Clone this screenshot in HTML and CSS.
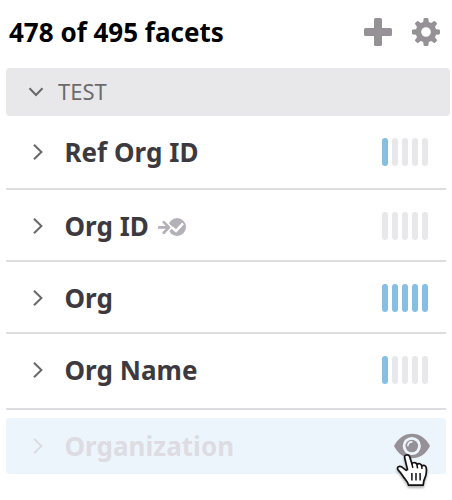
FILE: index.html
```html
<!DOCTYPE html>
<html lang="en">
<head>
<meta charset="utf-8">
<title>Facets</title>
<link rel="stylesheet" href="styles.css">
</head>
<body>
<main class="panel">
  <header class="header">
    <h1 class="title">478 of 495 facets</h1>
    <div class="actions">
      <svg class="icon" width="28" height="28" viewBox="0 0 28 28" aria-label="Add"><rect x="10" y="0" width="8" height="28" rx="1.6"/><rect x="0" y="10" width="28" height="8" rx="1.6"/></svg>
      <svg class="icon" width="28" height="28" viewBox="0 0 28 28" aria-label="Settings"><path fill-rule="evenodd" d="M11.6 1 Q11.7 0 12.7 0 H15.3 Q16.3 0 16.4 1 L16.8 4 L19.3 5 L21.7 3.2 Q22.4 2.7 23 3.3 L24.7 5 Q25.3 5.6 24.8 6.3 L23 8.7 L24 11.2 L27 11.6 Q28 11.7 28 12.7 V15.3 Q28 16.3 27 16.4 L24 16.8 L23 19.3 L24.8 21.7 Q25.3 22.4 24.7 23 L23 24.7 Q22.4 25.3 21.7 24.8 L19.3 23 L16.8 24 L16.4 27 Q16.3 28 15.3 28 H12.7 Q11.7 28 11.6 27 L11.2 24 L8.7 23 L6.3 24.8 Q5.6 25.3 5 24.7 L3.3 23 Q2.7 22.4 3.2 21.7 L5 19.3 L4 16.8 L1 16.4 Q0 16.3 0 15.3 V12.7 Q0 11.7 1 11.6 L4 11.2 L5 8.7 L3.2 6.3 Q2.7 5.6 3.3 5 L5 3.3 Q5.6 2.7 6.3 3.2 L8.7 5 L11.2 4 Z M14 9.2 A4.8 4.8 0 1 0 14 18.8 A4.8 4.8 0 1 0 14 9.2 Z"/></svg>
    </div>
  </header>
  <section>
    <h2 class="group">
      <svg class="group-chevron" width="16" height="10" viewBox="0 0 16 10"><path d="M1.5 1.3 L8 8 L14.5 1.3"/></svg>
      <span class="group-name">TEST</span>
    </h2>
    <ul class="facets">
      <li class="facet facet-first">
        <svg class="chevron" width="10" height="16" viewBox="0 0 10 16"><path d="M1 .8 L8.4 8 L1 15.2"/></svg>
        <span class="name">Ref Org ID</span>
        <span class="meter"><i class="bar on"></i><i class="bar"></i><i class="bar"></i><i class="bar"></i><i class="bar"></i></span>
      </li>
      <li class="facet">
        <svg class="chevron" width="10" height="16" viewBox="0 0 10 16"><path d="M1 .8 L8.4 8 L1 15.2"/></svg>
        <span class="name">Org ID</span>
        <svg class="mapped" width="28" height="18" viewBox="0 0 28 18"><circle cx="19.1" cy="9" r="8.9"/><path class="gap" d="M0 9.4 H11 M6.2 4 L11.5 9.4 L6.2 14.8"/><path class="arrow" d="M1 9.4 H10 M5.8 4.1 L11 9.4 L5.8 14.7"/><path class="check" d="M13.8 9.2 L18 13 L25 5.3"/></svg>
        <span class="meter"><i class="bar"></i><i class="bar"></i><i class="bar"></i><i class="bar"></i><i class="bar"></i></span>
      </li>
      <li class="facet">
        <svg class="chevron" width="10" height="16" viewBox="0 0 10 16"><path d="M1 .8 L8.4 8 L1 15.2"/></svg>
        <span class="name">Org</span>
        <span class="meter"><i class="bar on"></i><i class="bar on"></i><i class="bar on"></i><i class="bar on"></i><i class="bar on"></i></span>
      </li>
      <li class="facet facet-last">
        <svg class="chevron" width="10" height="16" viewBox="0 0 10 16"><path d="M1 .8 L8.4 8 L1 15.2"/></svg>
        <span class="name">Org Name</span>
        <span class="meter"><i class="bar on"></i><i class="bar"></i><i class="bar"></i><i class="bar"></i><i class="bar"></i></span>
      </li>
      <li class="facet facet-hidden">
        <svg class="chevron" width="10" height="16" viewBox="0 0 10 16"><path d="M1 .8 L8.4 8 L1 15.2"/></svg>
        <span class="name">Organization</span>
        <span class="toggle">
          <svg class="eye" width="36" height="26" viewBox="0 0 36 26"><path class="lid" d="M0 13 C4 5 10.5 .7 18 .7 S32 5 36 13 C32 21 25.5 25.3 18 25.3 S4 21 0 13 Z"/><circle class="white" cx="17.8" cy="13" r="9.1"/><circle class="lid" cx="17.8" cy="13" r="6.3"/><path class="glint" d="M13.9 12.6 A4 4 0 0 1 17.8 8.9"/></svg>
          <svg class="cursor" width="36" height="38" viewBox="0 0 36 38"><path class="hand" d="M8.6 4.5 C8 1.8 12.5 .8 13.7 3.7 L16 11 C17 8.8 20.4 9.1 21 11.6 C22.4 9.9 25.3 10.7 25.7 13 C27.5 11.6 30 12.6 30.3 15.2 C30.8 19.5 30.5 22 28.7 25.5 C27.4 28 27.6 29.5 27.2 32.2 H12.6 C11.8 28.8 9.5 26.8 7.5 24 C5.5 21 4.2 18.9 2.1 16.8 C.3 14.7 3 12.3 5.7 13.8 L10.2 17.4 L11.5 16.6 Z"/><path class="crease" d="M16 11 L16.8 14.8 M21 11.6 L21.5 15.4 M25.7 13 L26 16 M15.9 20 V27.5 M20 20 V27.5 M24.1 20 V27.5"/></svg>
        </span>
      </li>
    </ul>
  </section>
</main>
</body>
</html>
```
FILE: styles.css
```css
* { box-sizing: border-box; }

body {
  margin: 0;
  background: #fff;
  font-family: "Noto Sans", sans-serif;
}

.panel {
  min-height: 500px;
  padding-left: 6px;
}

.header {
  display: flex;
  align-items: center;
  justify-content: space-between;
  height: 68px;
  padding: 0 12px 4px 3px;
}

.title {
  margin: 0;
  font-size: 26px;
  font-weight: 700;
  line-height: 36px;
  color: #000;
}

.actions { display: flex; gap: 20px; }

.icon { display: block; fill: #969197; }

.group {
  display: flex;
  align-items: center;
  gap: 14px;
  height: 48px;
  margin: 0 2px 0 0;
  padding-left: 22px;
  border-radius: 4px;
  background: #e8e8ea;
  color: #6c6a6c;
  font-size: 22px;
  font-weight: 400;
}

.group-name { padding-bottom: 2px; }

.group-chevron path,
.chevron path {
  fill: none;
  stroke: #686769;
  stroke-width: 2;
}

.facets {
  margin: 0 6px 0 0;
  padding: 0;
  list-style: none;
}

.facet {
  display: flex;
  align-items: center;
  height: 72px;
  padding: 2px 18px 0 27px;
  border-bottom: 2px solid #dddce1;
  color: #3c3a3e;
  font-size: 26px;
  font-weight: 700;
  line-height: 36px;
}

.facet-first { height: 74px; padding-top: 0; }

.facet-last { height: 76px; padding: 0 18px 2px 27px; }

.facet-hidden {
  height: 56px;
  margin-top: 8px;
  padding: 0 16px 0 27px;
  border: 0;
  border-radius: 4px;
  background: #edf5fc;
  color: #dddce2;
}

.facet-hidden .chevron path { stroke: #dddce2; }

.name { letter-spacing: .05px; }

.chevron { margin-right: 21.4px; }

.mapped { margin: 2px 0 0 9.5px; }
.mapped circle { fill: #b4b0b7; }
.mapped path { fill: none; }
.mapped .gap { stroke: #fff; stroke-width: 5; }
.mapped .arrow { stroke: #b4b0b7; stroke-width: 2.7; stroke-linecap: round; stroke-linejoin: round; }
.mapped .check { stroke: #fff; stroke-width: 2.6; }

.meter { display: flex; gap: 4px; margin-left: auto; }

.bar {
  width: 6px;
  height: 28px;
  border-radius: 3px;
  background: #e8e8ea;
}

.bar.on { background: #86bfe2; }

.toggle {
  position: relative;
  margin-left: auto;
  height: 26px;
}

.eye { display: block; }
.eye .lid { fill: #969197; }
.eye .white { fill: #edf5fc; }
.eye .glint { fill: none; stroke: #edf5fc; stroke-width: 1.6; stroke-linecap: round; }

.cursor {
  position: absolute;
  top: 20px;
  left: 2px;
  filter: drop-shadow(0 2px 1px rgba(0, 0, 0, .3));
}
.hand { fill: #fff; stroke: #111; stroke-width: 1.7; stroke-linejoin: round; }
.crease { fill: none; stroke: #111; stroke-width: 1.5; }
```
